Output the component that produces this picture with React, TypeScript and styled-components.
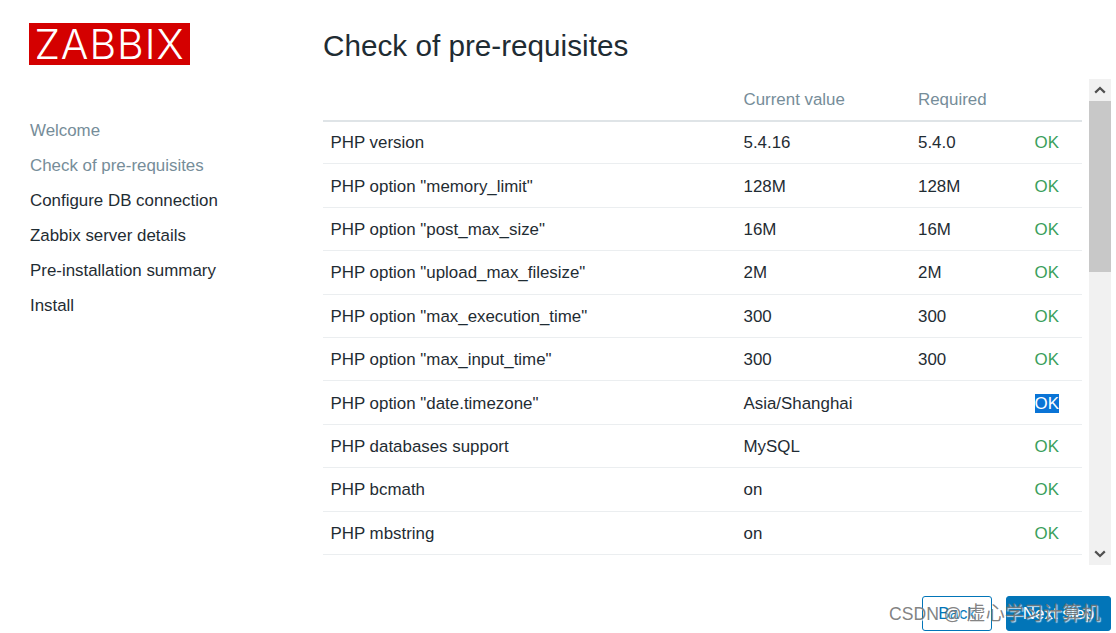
import React from "react";
import styled, { createGlobalStyle } from "styled-components";

const GlobalStyle = createGlobalStyle`
  html, body {
    margin: 0;
    padding: 0;
    background: #fff;
    font-family: "Liberation Sans", Arial, sans-serif;
  }
`;

type Row = {
  name: string;
  current: string;
  required?: string;
  selected?: boolean;
};

const rows: Row[] = [
  { name: "PHP version", current: "5.4.16", required: "5.4.0" },
  { name: 'PHP option "memory_limit"', current: "128M", required: "128M" },
  { name: 'PHP option "post_max_size"', current: "16M", required: "16M" },
  { name: 'PHP option "upload_max_filesize"', current: "2M", required: "2M" },
  { name: 'PHP option "max_execution_time"', current: "300", required: "300" },
  { name: 'PHP option "max_input_time"', current: "300", required: "300" },
  { name: 'PHP option "date.timezone"', current: "Asia/Shanghai", selected: true },
  { name: "PHP databases support", current: "MySQL" },
  { name: "PHP bcmath", current: "on" },
  { name: "PHP mbstring", current: "on" },
];

const steps = [
  { label: "Welcome", done: true },
  { label: "Check of pre-requisites", done: true },
  { label: "Configure DB connection" },
  { label: "Zabbix server details" },
  { label: "Pre-installation summary" },
  { label: "Install" },
];

export default function App() {
  return (
    <Page>
      <GlobalStyle />
      <Sidebar>
        <Logo>ZABBIX</Logo>
        <Steps>
          {steps.map((s) => (
            <Step key={s.label} $done={s.done}>
              {s.label}
            </Step>
          ))}
        </Steps>
      </Sidebar>
      <Main>
        <Title>Check of pre-requisites</Title>
        <ScrollArea>
          <TableBox>
            <Table>
              <thead>
                <tr>
                  <HeadCell $w={413} />
                  <HeadCell $w={174.5}>Current value</HeadCell>
                  <HeadCell $w={116.5}>Required</HeadCell>
                  <HeadCell />
                </tr>
              </thead>
              <tbody>
                {rows.map((r) => (
                  <tr key={r.name}>
                    <Cell>{r.name}</Cell>
                    <Cell>{r.current}</Cell>
                    <Cell>{r.required}</Cell>
                    <Cell>
                      <Ok $selected={r.selected}>OK</Ok>
                    </Cell>
                  </tr>
                ))}
              </tbody>
            </Table>
          </TableBox>
          <Scrollbar>
            <ScrollButton>
              <Chevron viewBox="0 0 12 8">
                <path d="M1.2 6.6 6 2l4.8 4.6" />
              </Chevron>
            </ScrollButton>
            <ScrollTrack>
              <ScrollThumb />
            </ScrollTrack>
            <ScrollButton>
              <Chevron viewBox="0 0 12 8">
                <path d="M1.2 1.4 6 6l4.8-4.6" />
              </Chevron>
            </ScrollButton>
          </Scrollbar>
        </ScrollArea>
        <Footer>
          <BackButton>Back</BackButton>
          <NextButton>Next step</NextButton>
        </Footer>
      </Main>
      <Watermark>
        <WatermarkLatin>CSDN @</WatermarkLatin>虚心学习计算机
      </Watermark>
    </Page>
  );
}

const Page = styled.div`
  position: relative;
  display: flex;
  width: 1116px;
  height: 633px;
  overflow: hidden;
  background: #fff;
  color: #1f2c33;
`;

const Sidebar = styled.aside`
  width: 294px;
  padding: 23px 0 0 30px;
  margin-right: -1px;
  flex-shrink: 0;
`;

const Logo = styled.div`
  width: 161px;
  height: 42px;
  margin-left: -1px;
  display: flex;
  align-items: center;
  justify-content: center;
  background: #d40000;
  color: #fff;
  font-family: Inter, "Liberation Sans", sans-serif;
  font-weight: 300;
  font-size: 41px;
  line-height: 42px;
  letter-spacing: 1px;
`;

const Steps = styled.ul`
  list-style: none;
  margin: 48px 0 0;
  padding: 0;
`;

const Step = styled.li<{ $done?: boolean }>`
  height: 35px;
  line-height: 35px;
  font-size: 16.9px;
  white-space: nowrap;
  color: ${(p) => (p.$done ? "#768d99" : "#1f2c33")};
`;

const Main = styled.main`
  flex: 1;
  display: flex;
  flex-direction: column;
  padding-right: 5px;
  min-width: 0;
`;

const Title = styled.h1`
  margin: 0;
  padding-top: 28px;
  height: 51px;
  font-size: 29.7px;
  line-height: 36px;
  font-weight: 400;
  color: #1f2c33;
  white-space: nowrap;
`;

const ScrollArea = styled.div`
  display: flex;
  justify-content: space-between;
  height: 486px;
`;

const TableBox = styled.div`
  width: 759px;
  overflow: hidden;
`;

const Table = styled.table`
  width: 100%;
  border-collapse: collapse;
  table-layout: fixed;
  font-size: 16.9px;
`;

const HeadCell = styled.th<{ $w?: number }>`
  width: ${(p) => (p.$w ? `${p.$w}px` : "auto")};
  height: 41.5px;
  padding: 2px 7.5px 0;
  text-align: left;
  font-weight: 400;
  color: #768d99;
  border-bottom: 2px solid #dfe4e7;
  box-sizing: border-box;
`;

const Cell = styled.td`
  height: 43.4px;
  padding: 2px 7.5px 0;
  box-sizing: border-box;
  border-bottom: 1px solid #ebeef0;
  white-space: nowrap;
`;

const Ok = styled.span<{ $selected?: boolean }>`
  color: ${(p) => (p.$selected ? "#fff" : "#3a9f5c")};
  background: ${(p) => (p.$selected ? "#0a74d6" : "transparent")};
`;

const Scrollbar = styled.div`
  width: 22px;
  display: flex;
  flex-direction: column;
  background: #f1f1f1;
`;

const ScrollButton = styled.div`
  height: 22px;
  display: flex;
  align-items: center;
  justify-content: center;
  flex-shrink: 0;
`;

const Chevron = styled.svg`
  width: 12px;
  height: 8px;
  fill: none;
  stroke: #505050;
  stroke-width: 2.2;
`;

const ScrollTrack = styled.div`
  flex: 1;
`;

const ScrollThumb = styled.div`
  height: 171px;
  background: #c8c8c8;
`;

const Footer = styled.div`
  display: flex;
  justify-content: flex-end;
  gap: 14px;
  margin-top: 31px;
`;

const BackButton = styled.button`
  width: 70px;
  height: 35px;
  padding: 0;
  border: 1px solid #0275b8;
  border-radius: 3px;
  background: #fff;
  color: #0275b8;
  font: 16.9px "Liberation Sans", Arial, sans-serif;
`;

const NextButton = styled.button`
  width: 105px;
  height: 35px;
  padding: 0;
  border: 1px solid #0275b8;
  border-radius: 3px;
  background: #0275b8;
  color: #fff;
  font: 16.9px "Liberation Sans", Arial, sans-serif;
`;

const Watermark = styled.div`
  position: absolute;
  left: 889px;
  top: 603px;
  font-family: "Liberation Sans", "Noto Sans CJK SC", sans-serif;
  font-size: 19.1px;
  line-height: 22px;
  color: rgba(115, 115, 115, 0.9);
  text-shadow: 1px 1px 1px rgba(255, 255, 255, 0.8);
  white-space: nowrap;
  pointer-events: none;
`;

const WatermarkLatin = styled.span`
  font-size: 17.6px;
  margin-right: 5px;
`;
